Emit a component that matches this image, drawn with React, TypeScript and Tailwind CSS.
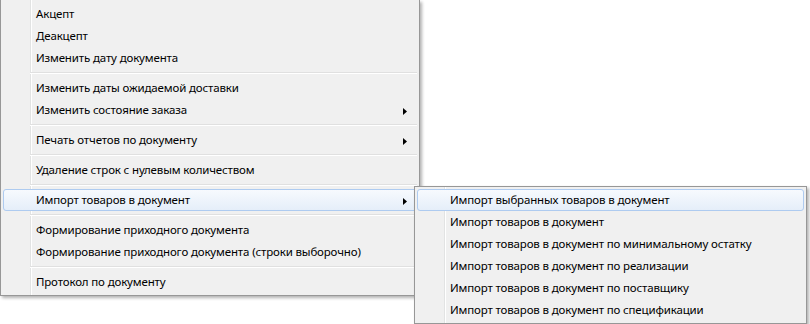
import React from 'react';

type Item = { label: string; sub?: boolean; active?: boolean };

const mainGroups: Item[][] = [
  [{ label: 'Акцепт' }, { label: 'Деакцепт' }, { label: 'Изменить дату документа' }],
  [{ label: 'Изменить даты ожидаемой доставки' }, { label: 'Изменить состояние заказа', sub: true }],
  [{ label: 'Печать отчетов по документу', sub: true }],
  [{ label: 'Удаление строк с нулевым количеством' }],
  [{ label: 'Импорт товаров в документ', sub: true, active: true }],
  [
    { label: 'Формирование приходного документа' },
    { label: 'Формирование приходного документа (строки выборочно)' },
  ],
  [{ label: 'Протокол по документу' }],
];

const subItems: Item[] = [
  { label: 'Импорт выбранных товаров в документ', active: true },
  { label: 'Импорт товаров в документ' },
  { label: 'Импорт товаров в документ по минимальному остатку' },
  { label: 'Импорт товаров в документ по реализации' },
  { label: 'Импорт товаров в документ по поставщику' },
  { label: 'Импорт товаров в документ по спецификации' },
];

const Arrow = () => (
  <svg width="4" height="7" viewBox="0 0 4 7" className="absolute right-[9px] top-[8px]">
    <polygon points="0,0 4,3.5 0,7" fill="#000" />
  </svg>
);

const MenuItem = ({ item }: { item: Item }) => (
  <div
    className={
      'relative h-[22px] flex items-center pl-[32px] rounded-[3px] border ' +
      (item.active
        ? 'border-[#aecbf0] bg-gradient-to-b from-[#f7fafe] to-[#e5eef9]'
        : 'border-transparent')
    }
  >
    <span className="whitespace-nowrap">{item.label}</span>
    {item.sub && <Arrow />}
  </div>
);

const Separator = () => (
  <div className="h-[8px] flex flex-col justify-center pl-[27px]">
    <div className="h-px bg-[#e0e0e0]" />
    <div className="h-px bg-white" />
  </div>
);

const menuBg =
  'bg-[linear-gradient(to_right,#f0f0f0_29px,#e2e3e3_29px,#e2e3e3_30px,#ffffff_30px,#ffffff_31px,#f0f0f0_31px)]';

export default function App() {
  return (
    <div
      className="relative w-[810px] h-[324px] bg-white text-[11.5px] tracking-[-0.15px] text-black overflow-hidden"
      style={{ fontFamily: '"Segoe UI", "Noto Sans", "Open Sans", sans-serif' }}
    >
      <div
        className={
          'w-[420px] border-x border-b border-[#979797] pt-[3px] px-[2px] pb-[2px] shadow-[2px_2px_3px_rgba(0,0,0,0.3)] ' +
          menuBg
        }
      >
        {mainGroups.map((g, gi) => (
          <React.Fragment key={gi}>
            {gi > 0 && <Separator />}
            {g.map((it) => (
              <MenuItem key={it.label} item={it} />
            ))}
          </React.Fragment>
        ))}
      </div>

      <div
        className={
          'absolute left-[414px] top-[186px] w-[393px] border border-[#979797] p-[2px] shadow-[2px_2px_3px_rgba(0,0,0,0.3)] ' +
          menuBg
        }
      >
        {subItems.map((it) => (
          <MenuItem key={it.label} item={it} />
        ))}
      </div>
    </div>
  );
}
